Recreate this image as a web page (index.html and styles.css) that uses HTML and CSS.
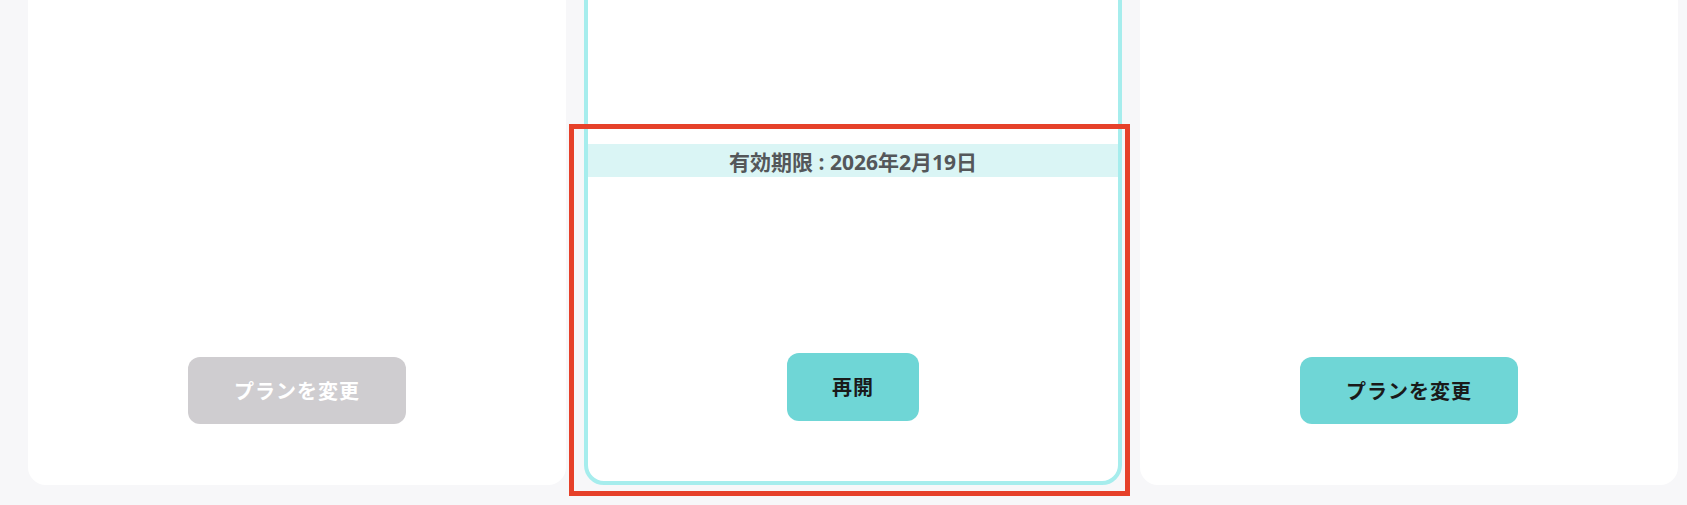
FILE: index.html
```html
<!DOCTYPE html>
<html lang="ja">
<head>
<meta charset="utf-8">
<title>プラン</title>
<link rel="stylesheet" href="styles.css">
</head>
<body>
<div class="page">
  <div class="plans">
    <section class="card">
      <div class="card-body"></div>
      <button class="btn btn-disabled" type="button">プランを変更</button>
    </section>
    <section class="card card-current">
      <div class="card-body">
        <div class="expiry">有効期限 : 2026年2月19日</div>
      </div>
      <button class="btn btn-primary btn-resume" type="button">再開</button>
      <div class="highlight"></div>
    </section>
    <section class="card">
      <div class="card-body"></div>
      <button class="btn btn-primary" type="button">プランを変更</button>
    </section>
  </div>
</div>
</body>
</html>
```
FILE: styles.css
```css
html, body {
  margin: 0;
  padding: 0;
  background: #f7f7f9;
  font-family: "Noto Sans CJK JP", "Noto Sans", sans-serif;
}

.page {
  height: 505px;
  overflow: hidden;
}

.plans {
  display: flex;
  gap: 18px;
  padding: 0 9px 0 28px;
  margin-top: -40px;
}

.card {
  box-sizing: border-box;
  width: 538px;
  height: 525px;
  flex: none;
  background: #ffffff;
  border-radius: 18px;
  display: flex;
  flex-direction: column;
  align-items: center;
  padding-bottom: 61px;
  position: relative;
}

.card-body {
  flex: 1;
  align-self: stretch;
}

.card-current {
  border: 4px solid #a6eded;
  border-radius: 20px;
  padding-bottom: 60px;
}

.expiry {
  margin-top: 180px;
  height: 33px;
  background: #daf5f5;
  color: #54575a;
  font-family: "Open Sans", "Noto Sans CJK JP", sans-serif;
  font-weight: 700;
  font-size: 21px;
  display: flex;
  align-items: center;
  justify-content: center;
}

.btn {
  box-sizing: border-box;
  height: 67px;
  padding: 0 46px;
  border: none;
  border-radius: 12px;
  font-family: "Noto Sans CJK JP", sans-serif;
  font-size: 20px;
  font-weight: 700;
  letter-spacing: 1px;
  line-height: 1;
}

.btn-resume {
  height: 68px;
  padding: 0 45px;
}

.btn-disabled {
  background: #cfcdd0;
  color: #ffffff;
}

.btn-primary {
  background: #6fd6d6;
  color: #1a1a1a;
}

.highlight {
  box-sizing: border-box;
  position: absolute;
  left: -19px;
  top: 160px;
  width: 561px;
  height: 372px;
  border: 5px solid #e6412a;
  pointer-events: none;
}
```
